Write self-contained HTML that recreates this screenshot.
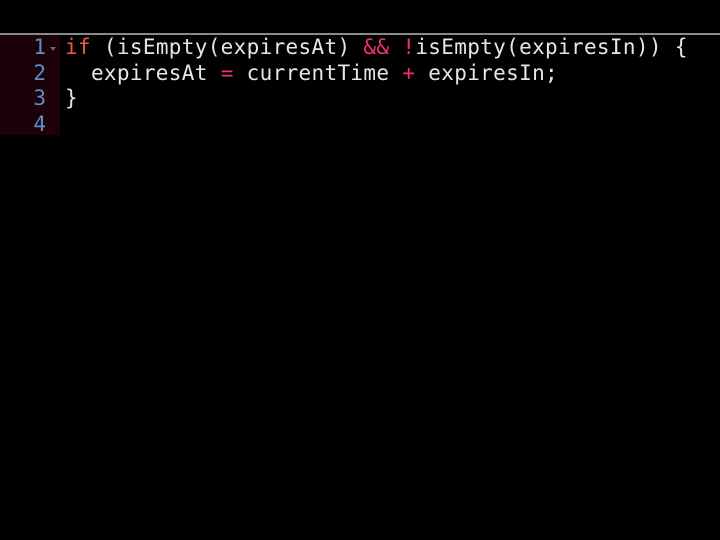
<!DOCTYPE html>
<html><head><style>
html,body{margin:0;padding:0;background:#000;width:720px;height:540px;overflow:hidden}
.top{position:absolute;left:0;top:33px;width:720px;height:2px;background:#8a8a8e}
.gut{position:absolute;left:0;top:35px;width:60px;height:100px;background:#1c0208}
.code{position:absolute;top:35px;left:0;font-family:"DejaVu Sans Mono","Liberation Mono",monospace;font-size:21px;letter-spacing:0.33px;line-height:25.5px;color:#e6e6e6;white-space:pre}
.ln{display:inline-block;width:46px;text-align:right;color:#5b8ec9;letter-spacing:0}
.f{display:inline-block;width:19px;position:relative}
.f.a:after{content:"";position:absolute;left:4px;top:-7px;border-left:3px solid transparent;border-right:3px solid transparent;border-top:4px solid #666}
.k{color:#f2583e}.o{color:#f0307a}
</style></head><body>
<div class="top"></div><div class="gut"></div>
<div class="code"><span class="ln">1</span><span class="f a"></span><span class="k">if</span> (isEmpty(expiresAt) <span class="o">&amp;&amp;</span> <span class="o">!</span>isEmpty(expiresIn)) {
<span class="ln">2</span><span class="f"></span>  expiresAt <span class="o">=</span> currentTime <span class="o">+</span> expiresIn;
<span class="ln">3</span><span class="f"></span>}
<span class="ln">4</span><span class="f"></span></div>
</body></html>
